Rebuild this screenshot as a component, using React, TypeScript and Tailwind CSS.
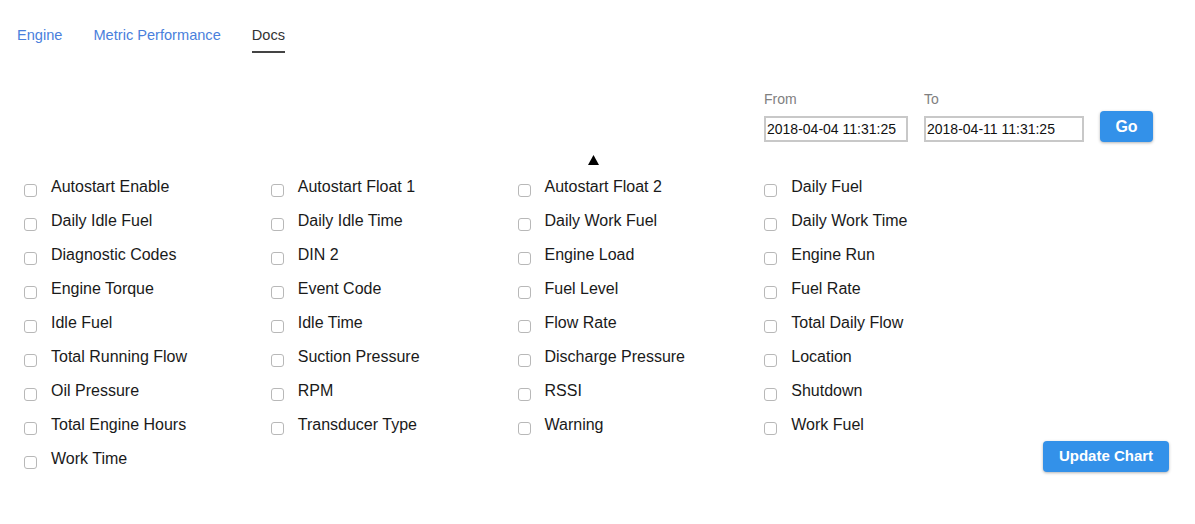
import React from "react";

const items = [
  "Autostart Enable", "Autostart Float 1", "Autostart Float 2", "Daily Fuel",
  "Daily Idle Fuel", "Daily Idle Time", "Daily Work Fuel", "Daily Work Time",
  "Diagnostic Codes", "DIN 2", "Engine Load", "Engine Run",
  "Engine Torque", "Event Code", "Fuel Level", "Fuel Rate",
  "Idle Fuel", "Idle Time", "Flow Rate", "Total Daily Flow",
  "Total Running Flow", "Suction Pressure", "Discharge Pressure", "Location",
  "Oil Pressure", "RPM", "RSSI", "Shutdown",
  "Total Engine Hours", "Transducer Type", "Warning", "Work Fuel",
  "Work Time",
];

export default function App() {
  return (
    <div className="w-[1195px] h-[524px] bg-white text-[#222] font-['Liberation_Sans',Arial,sans-serif]">
      {/* Tabs */}
      <nav className="flex gap-[31px] pl-[17px] pt-[25px] text-[14.6px]">
        <div className="flex flex-col">
          <span className="leading-5 text-[#4a7fdc]">Engine</span>
          <span className="mt-[6px] h-[2px]" />
        </div>
        <div className="flex flex-col">
          <span className="leading-5 text-[#4a7fdc]">Metric Performance</span>
          <span className="mt-[6px] h-[2px]" />
        </div>
        <div className="flex flex-col">
          <span className="leading-5 text-[#333]">Docs</span>
          <span className="mt-[6px] h-[2px] bg-[#444]" />
        </div>
      </nav>

      {/* Date range */}
      <div className="flex justify-end items-end gap-4 pr-[42px] mt-[39px]">
        <div className="flex flex-col">
          <label className="text-[14px] leading-4 text-[#808080] -mt-px">From</label>
          <div className="mt-[9px] w-[144px] h-[26px] border-2 border-[#c8c8c8] pl-[1px] flex items-center text-[14px] text-[#111]">
            2018-04-04 11:31:25
          </div>
        </div>
        <div className="flex flex-col">
          <label className="text-[14px] leading-4 text-[#808080] -mt-px">To</label>
          <div className="mt-[9px] w-[160px] h-[26px] border-2 border-[#c8c8c8] pl-[1px] flex items-center text-[14px] text-[#111]">
            2018-04-11 11:31:25
          </div>
        </div>
        <button className="w-[53px] h-[31px] rounded-[4px] bg-[#3391e9] text-white font-bold text-[16px] shadow-[0_1px_3px_rgba(0,0,0,0.3)]">
          Go
        </button>
      </div>

      {/* Triangle */}
      <div className="flex justify-center pr-[9px] mt-[13px]">
        <svg width="11" height="10" viewBox="0 0 11 10">
          <polygon points="5.5,0 11,10 0,10" fill="#000" />
        </svg>
      </div>

      {/* Checkbox grid */}
      <div className="flex mt-[5px]">
        <div className="grid grid-cols-4 w-[1011px] pl-6">
          {items.map((label) => (
            <div key={label} className="flex items-center h-[34px]">
              <span className="mt-[7px] w-[13px] h-[13px] border border-[#b8b8b8] rounded-[3px] bg-white shrink-0" />
              <span className="ml-[14px] text-[16px] text-[#1a1a1a]">{label}</span>
            </div>
          ))}
        </div>
        <div className="flex-1 flex justify-end items-end pr-[26px] pb-[4px]">
          <button className="w-[126px] h-[31px] rounded-[4px] bg-[#3391e9] text-white font-bold text-[15px] shadow-[0_1px_3px_rgba(0,0,0,0.3)]">
            Update Chart
          </button>
        </div>
      </div>
    </div>
  );
}
